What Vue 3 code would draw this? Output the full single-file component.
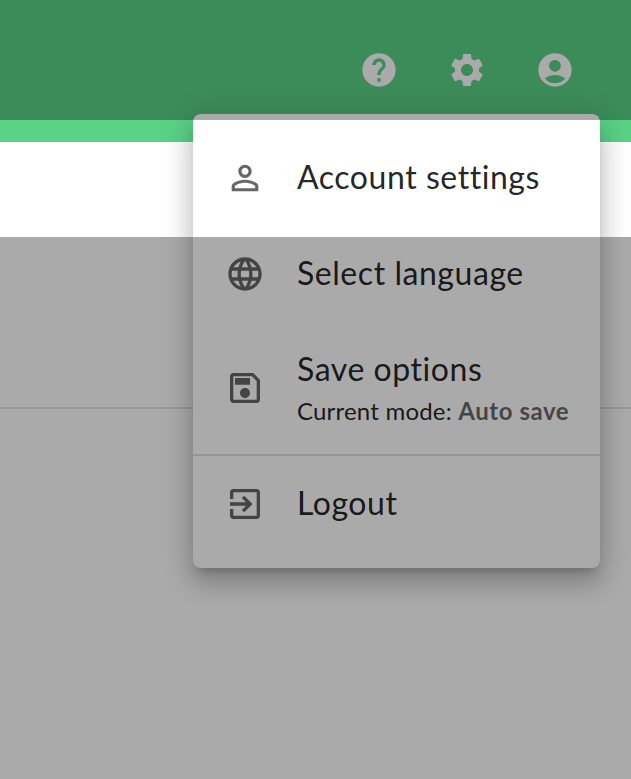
<template>
  <div class="page">
    <header class="header">
      <button v-for="b in topIcons" :key="b.name" class="top-btn" :aria-label="b.name">
        <svg viewBox="0 0 24 24" class="icon"><path :d="b.d" /></svg>
      </button>
    </header>
    <div class="accent"></div>
    <section class="band"></section>
    <section class="content"></section>

    <nav class="menu">
      <div class="row" v-for="it in items" :key="it.label" :class="{ tall: it.sub, rule: it.rule }">
        <svg viewBox="0 0 24 24" class="icon item-icon"><path :d="it.d" /></svg>
        <div class="texts">
          <div class="label">{{ it.label }}</div>
          <div v-if="it.sub" class="sub">Current mode: <b>Auto save</b></div>
        </div>
      </div>
    </nav>

    <div class="dim dim-top"></div>
    <div class="dim dim-bottom"></div>
  </div>
</template>

<script setup>
const topIcons = [
  { name: 'Help', d: 'M12 2C6.48 2 2 6.48 2 12s4.48 10 10 10 10-4.48 10-10S17.52 2 12 2zm1 17h-2v-2h2v2zm2.07-7.75l-.9.92C13.45 12.9 13 13.5 13 15h-2v-.5c0-1.1.45-2.1 1.17-2.83l1.24-1.26c.37-.36.59-.86.59-1.41 0-1.1-.9-2-2-2s-2 .9-2 2H8c0-2.21 1.79-4 4-4s4 1.79 4 4c0 .88-.36 1.68-.93 2.25z' },
  { name: 'Settings', d: 'M19.14 12.94c.04-.3.06-.61.06-.94 0-.32-.02-.64-.07-.94l2.03-1.58c.18-.14.23-.41.12-.61l-1.92-3.32c-.12-.22-.37-.29-.59-.22l-2.39.96c-.5-.38-1.03-.7-1.62-.94l-.36-2.54c-.04-.24-.24-.41-.48-.41h-3.84c-.24 0-.43.17-.47.41l-.36 2.54c-.59.24-1.13.57-1.62.94l-2.39-.96c-.22-.08-.47 0-.59.22L2.74 8.87c-.12.21-.08.47.12.61l2.03 1.58c-.05.3-.09.63-.09.94s.02.64.07.94l-2.03 1.58c-.18.14-.23.41-.12.61l1.92 3.32c.12.22.37.29.59.22l2.39-.96c.5.38 1.03.7 1.62.94l.36 2.54c.05.24.24.41.48.41h3.84c.24 0 .44-.17.47-.41l.36-2.54c.59-.24 1.13-.56 1.62-.94l2.39.96c.22.08.47 0 .59-.22l1.92-3.32c.12-.22.07-.47-.12-.61l-2.01-1.58zM12 15.6c-1.98 0-3.6-1.62-3.6-3.6s1.62-3.6 3.6-3.6 3.6 1.62 3.6 3.6-1.62 3.6-3.6 3.6z' },
  { name: 'Account', d: 'M12 2C6.48 2 2 6.48 2 12s4.48 10 10 10 10-4.48 10-10S17.52 2 12 2zm0 4c1.93 0 3.5 1.57 3.5 3.5S13.93 13 12 13s-3.5-1.57-3.5-3.5S10.07 6 12 6zm0 14c-2.03 0-4.43-.82-6.14-2.88C7.55 15.8 9.68 15 12 15s4.45.8 6.14 2.12C16.43 19.18 14.03 20 12 20z' }
]
const items = [
  { label: 'Account settings', d: 'M12 5.9c1.16 0 2.1.94 2.1 2.1s-.94 2.1-2.1 2.1S9.9 9.16 9.9 8s.94-2.1 2.1-2.1m0 9c2.97 0 6.1 1.46 6.1 2.1v1.1H5.9V17c0-.64 3.13-2.1 6.1-2.1M12 4C9.79 4 8 5.79 8 8s1.79 4 4 4 4-1.79 4-4-1.79-4-4-4zm0 9c-2.67 0-8 1.34-8 4v3h16v-3c0-2.66-5.33-4-8-4z' },
  { label: 'Select language', d: 'M11.99 2C6.47 2 2 6.48 2 12s4.47 10 9.99 10C17.52 22 22 17.52 22 12S17.52 2 11.99 2zm6.93 6h-2.95c-.32-1.25-.78-2.45-1.38-3.56 1.84.63 3.37 1.91 4.33 3.56zM12 4.04c.83 1.2 1.48 2.53 1.91 3.96h-3.82c.43-1.43 1.08-2.76 1.91-3.96zM4.26 14C4.1 13.36 4 12.69 4 12s.1-1.36.26-2h3.38c-.08.66-.14 1.32-.14 2 0 .68.06 1.34.14 2H4.26zm.82 2h2.95c.32 1.25.78 2.45 1.38 3.56-1.84-.63-3.37-1.9-4.33-3.56zm2.95-8H5.08c.96-1.66 2.49-2.93 4.33-3.56C8.81 5.55 8.35 6.75 8.03 8zM12 19.96c-.83-1.2-1.48-2.53-1.91-3.96h3.82c-.43 1.43-1.08 2.76-1.91 3.96zM14.34 14H9.66c-.09-.66-.16-1.32-.16-2 0-.68.07-1.35.16-2h4.68c.09.65.16 1.32.16 2 0 .68-.07 1.34-.16 2zm.25 5.56c.6-1.11 1.06-2.31 1.38-3.56h2.95c-.96 1.65-2.49 2.93-4.33 3.56zM16.36 14c.08-.66.14-1.32.14-2 0-.68-.06-1.34-.14-2h3.38c.16.64.26 1.31.26 2s-.1 1.36-.26 2h-3.38z' },
  { label: 'Save options', sub: true, rule: true, d: 'M17 3H5c-1.11 0-2 .9-2 2v14c0 1.1.89 2 2 2h14c1.1 0 2-.9 2-2V7l-4-4zm2 16H5V5h11.17L19 7.83V19zm-7-7c-1.66 0-3 1.34-3 3s1.34 3 3 3 3-1.34 3-3-1.34-3-3-3zM6 6h9v4H6z' },
  { label: 'Logout', d: 'M10.09 15.59L11.5 17l5-5-5-5-1.41 1.41L12.67 11H3v2h9.67l-2.58 2.59zM19 3H5c-1.11 0-2 .9-2 2v4h2V5h14v14H5v-4H3v4c0 1.1.89 2 2 2h14c1.1 0 2-.9 2-2V5c0-1.1-.9-2-2-2z' }
]
</script>

<style scoped>
.page {
  position: relative;
  width: 631px;
  height: 779px;
  overflow: hidden;
  background: #fff;
  font-family: Lato, "Noto Sans", sans-serif;
}
.header {
  height: 120px;
  box-sizing: border-box;
  padding: 20px 56px 0 0;
  background: #5ad286;
  display: flex;
  justify-content: flex-end;
  align-items: center;
  gap: 48px;
}
.top-btn {
  width: 40px;
  height: 40px;
  padding: 0;
  border: 0;
  background: none;
  color: #fff;
  display: flex;
}
.icon {
  width: 40px;
  height: 40px;
  display: block;
  fill: currentColor;
  flex: none;
}
.accent {
  height: 22px;
  background: #5ad286;
}
.band {
  height: 265px;
  border-bottom: 2px solid rgba(0, 0, 0, 0.1);
}
.menu {
  position: absolute;
  left: 193px;
  top: 114px;
  width: 407px;
  height: 454px;
  box-sizing: border-box;
  padding: 16px 0;
  background: #fff;
  border-radius: 8px;
  box-shadow: 0 8px 10px -5px rgba(0,0,0,.2), 0 16px 24px 2px rgba(0,0,0,.14), 0 6px 30px 5px rgba(0,0,0,.12);
}
.row {
  height: 96px;
  display: flex;
  align-items: center;
  padding-left: 32px;
  gap: 32px;
  box-sizing: border-box;
}
.row.tall {
  height: 134px;
}
.row.rule {
  border-bottom: 2px solid rgba(0, 0, 0, 0.12);
}
.row:not(.tall) .texts {
  margin-bottom: 2px;
}
.item-icon {
  color: rgba(0, 0, 0, 0.6);
}
.label {
  font-size: 32px;
  line-height: 40px;
  letter-spacing: 0.55px;
  color: rgba(0, 0, 0, 0.87);
}
.sub {
  font-size: 24px;
  line-height: 32px;
  margin-top: 6px;
  letter-spacing: 0.2px;
  color: rgba(0, 0, 0, 0.87);
}
.sub b {
  font-weight: 700;
  letter-spacing: 0.55px;
  color: rgba(0, 0, 0, 0.6);
}
.dim {
  position: absolute;
  left: 0;
  right: 0;
  background: rgba(0, 0, 0, 0.333);
}
.dim-top {
  top: 0;
  height: 120px;
}
.dim-bottom {
  top: 237px;
  bottom: 0;
}
</style>
